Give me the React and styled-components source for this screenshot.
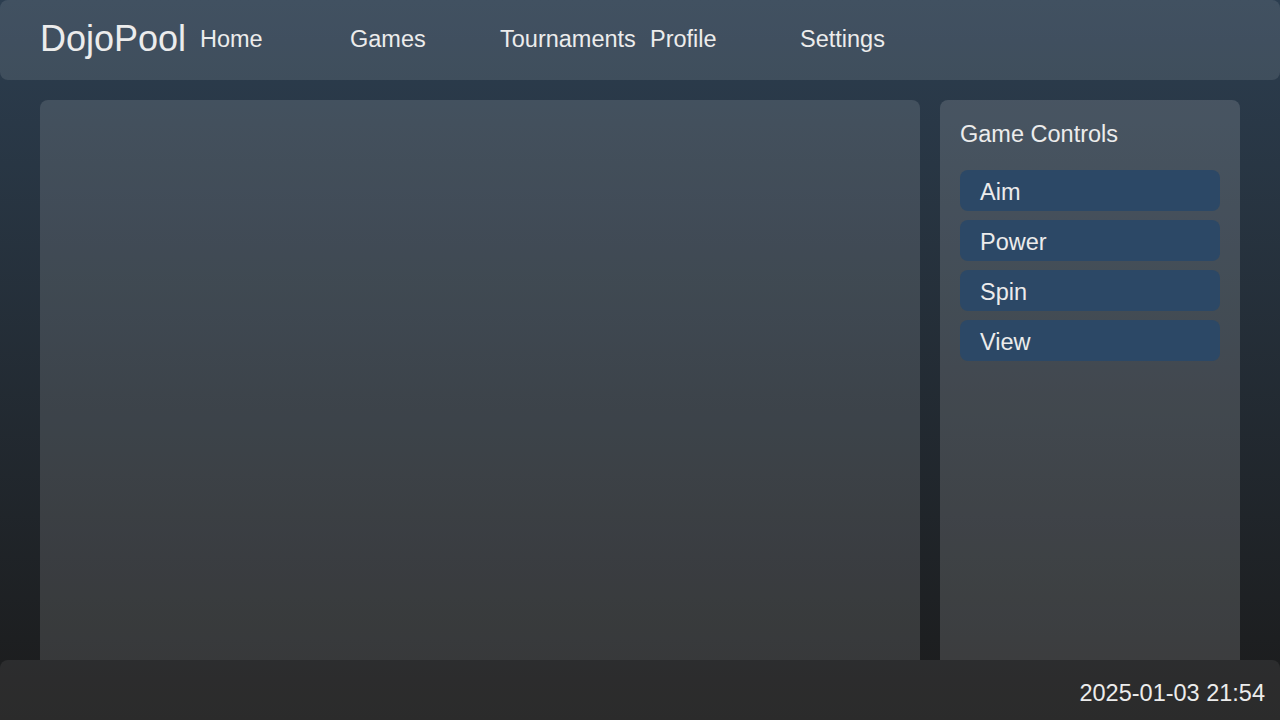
import React from "react";
import styled, { createGlobalStyle } from "styled-components";

const GlobalStyle = createGlobalStyle`
  html, body {
    margin: 0;
    padding: 0;
    height: 100%;
  }
  body {
    font-family: "Liberation Sans", Arial, sans-serif;
    color: #ececec;
    background: linear-gradient(180deg, #2c3e50 0%, #1b1b1b 100%);
  }
  #root {
    height: 100%;
  }
`;

const navItems = ["Home", "Games", "Tournaments", "Profile", "Settings"];
const controls = ["Aim", "Power", "Spin", "View"];

const App = () => {
  return (
    <>
      <GlobalStyle />
      <Page>
        <Header>
          <Logo>DojoPool</Logo>
          <Nav>
            {navItems.map((item) => (
              <NavLink key={item}>{item}</NavLink>
            ))}
          </Nav>
        </Header>
        <Main>
          <GameArea />
          <Sidebar>
            <SidebarTitle>Game Controls</SidebarTitle>
            <ControlList>
              {controls.map((c) => (
                <ControlButton key={c}>{c}</ControlButton>
              ))}
            </ControlList>
          </Sidebar>
        </Main>
        <Footer>
          <Clock>2025-01-03 21:54</Clock>
        </Footer>
      </Page>
    </>
  );
};

export default App;

const Page = styled.div`
  height: 100vh;
  display: flex;
  flex-direction: column;
  overflow: hidden;
`;

const Header = styled.header`
  height: 80px;
  flex-shrink: 0;
  display: flex;
  align-items: center;
  padding: 0 40px 2px;
  box-sizing: border-box;
  background: rgba(255, 255, 255, 0.1);
  border-radius: 8px;
`;

const Logo = styled.h1`
  width: 160px;
  margin: 0;
  font-size: 36px;
  font-weight: 400;
`;

const Nav = styled.nav`
  display: flex;
`;

const NavLink = styled.a`
  width: 150px;
  font-size: 23.5px;
  color: #ececec;
  cursor: pointer;
`;

const Main = styled.main`
  flex: 1;
  min-height: 0;
  display: grid;
  grid-template-columns: 1fr 300px;
  gap: 20px;
  padding: 20px 40px 0;
`;

const GameArea = styled.div`
  background: rgba(255, 255, 255, 0.12);
  border-radius: 8px 8px 0 0;
`;

const Sidebar = styled.aside`
  background: rgba(255, 255, 255, 0.14);
  border-radius: 8px 8px 0 0;
  padding: 20px;
`;

const SidebarTitle = styled.h3`
  margin: 0 0 22px;
  font-size: 23.5px;
  font-weight: 400;
  line-height: 28px;
`;

const ControlList = styled.div`
  display: flex;
  flex-direction: column;
  gap: 9px;
`;

const ControlButton = styled.button`
  height: 41px;
  padding: 3px 20px 0;
  border: none;
  border-radius: 8px;
  background: #2c4866;
  color: #ececec;
  font-family: "Liberation Sans", Arial, sans-serif;
  font-size: 23.5px;
  text-align: left;
  cursor: pointer;
`;

const Footer = styled.footer`
  height: 60px;
  flex-shrink: 0;
  display: flex;
  align-items: center;
  justify-content: flex-end;
  padding: 7px 15px 0;
  box-sizing: border-box;
  background: rgba(255, 255, 255, 0.07);
  border-radius: 8px 8px 0 0;
`;

const Clock = styled.span`
  font-size: 23.5px;
`;
